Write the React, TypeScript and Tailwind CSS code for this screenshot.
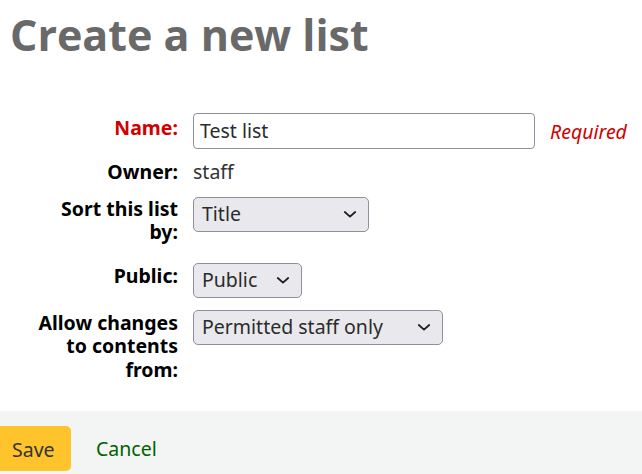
import React from 'react';

const Chevron = () => (
  <svg width="16" height="16" viewBox="0 0 16 16" className="shrink-0">
    <path d="M2.8 6l5.2 4.6L13.2 6" fill="none" stroke="#1f1f1f" strokeWidth="1.8" strokeLinecap="round" strokeLinejoin="round" />
  </svg>
);

const Select = ({ value, width }: { value: string; width: string }) => (
  <div
    className={`flex h-[35px] items-center justify-between rounded-[5px] border border-[#8f8f9d] bg-[#e9e9ed] pl-[8px] pr-[10px] text-[19.5px] text-[#2b2b2b] ${width}`}
  >
    <span>{value}</span>
    <Chevron />
  </div>
);

const Label = ({ children, red }: { children: React.ReactNode; red?: boolean }) => (
  <div
    className={`w-[144px] shrink-0 text-right text-[19.5px] font-bold leading-[23.5px] ${red ? 'text-[#d00000]' : 'text-black'}`}
  >
    {children}
  </div>
);

export default function App() {
  return (
    <div className="flex h-[474px] w-[642px] flex-col bg-white" style={{ fontFamily: '"Noto Sans", "Open Sans", sans-serif' }}>
      <h1
        className="pl-[10px] pt-[6px] text-[43px] font-bold leading-[58px] text-[#696969]"
        style={{ fontFamily: '"Open Sans", "Noto Sans", sans-serif' }}
      >
        Create a new list
      </h1>

      <div className="mt-[49px] flex flex-col pl-[34px]">
        <div className="flex items-start gap-[15px]">
          <div className="pt-[3px]">
            <Label red>Name:</Label>
          </div>
          <div className="flex h-[36px] w-[342px] items-center rounded-[4px] border border-[#8f8f9d] bg-white pl-[6px] text-[19.5px] text-[#2b2b2b]">
            Test list
          </div>
          <span className="pt-[4px] text-[19.5px] italic text-[#d00000]">Required</span>
        </div>

        <div className="mt-[11px] flex items-start gap-[15px]">
          <Label>Owner:</Label>
          <span className="text-[19.5px] leading-[23.5px] text-[#333]">staff</span>
        </div>

        <div className="mt-[13px] flex items-start gap-[15px]">
          <Label>Sort this list by:</Label>
          <Select value="Title" width="w-[176px]" />
        </div>

        <div className="mt-[19px] flex items-start gap-[15px]">
          <div className="pt-[1px]">
            <Label>Public:</Label>
          </div>
          <Select value="Public" width="w-[109px]" />
        </div>

        <div className="mt-[12px] flex items-start gap-[15px]">
          <div className="pt-[1px]">
            <Label>Allow changes to contents from:</Label>
          </div>
          <Select value="Permitted staff only" width="w-[250px]" />
        </div>
      </div>

      <div className="mt-auto flex h-[63px] items-start gap-[25px] bg-[#f3f4f4] pt-[15px]">
        <div className="flex h-[45px] w-[71px] items-center rounded-r-[5px] bg-[#ffc32b] pl-[12px] pt-[2px] text-[19.5px] text-[#333]">
          Save
        </div>
        <span className="pt-[8px] text-[19.5px] text-[#006100]">Cancel</span>
      </div>
    </div>
  );
}
